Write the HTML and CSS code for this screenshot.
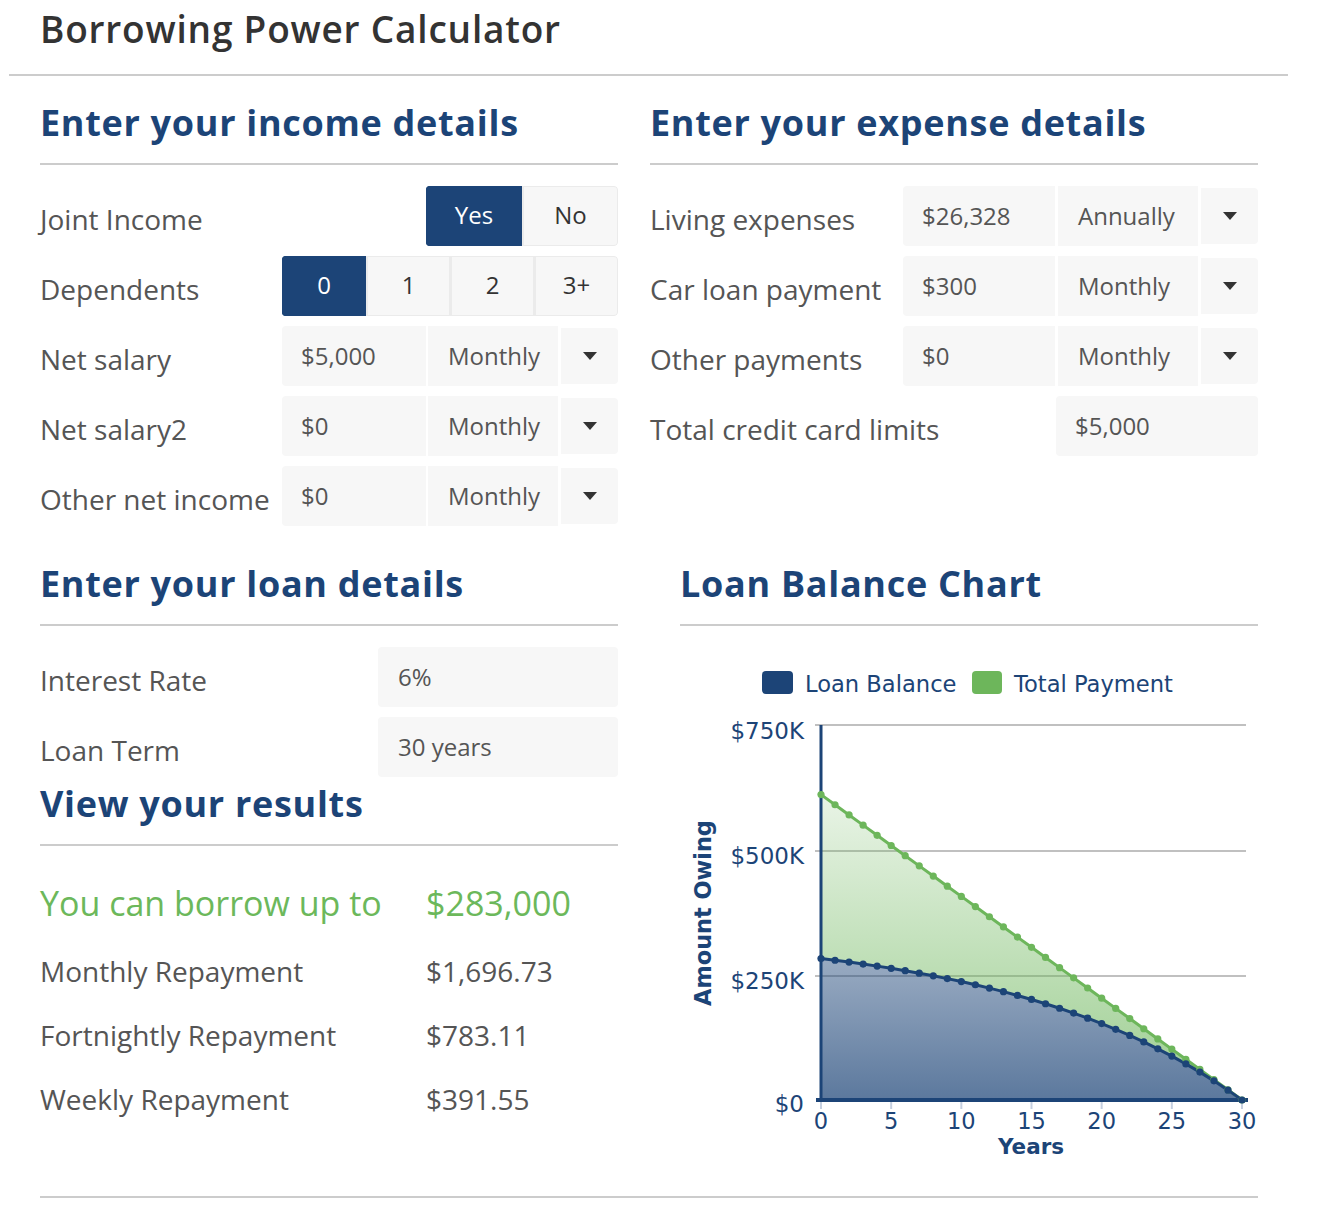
FILE: index.html
```html
<!DOCTYPE html>
<html lang="en">
<head>
<meta charset="utf-8">
<title>Borrowing Power Calculator</title>
<link rel="stylesheet" href="styles.css">
</head>
<body>
<header class="top">
  <h1 class="title">Borrowing Power Calculator</h1>
</header>
<main class="content">
  <div class="row-top">
    <section class="panel">
      <h2 class="sec-title">Enter your income details</h2>
      <div class="fields">
        <div class="frow">
          <span class="flabel">Joint Income</span>
          <div class="seg seg-yn"><span class="btn on">Yes</span><span class="btn">No</span></div>
        </div>
        <div class="frow">
          <span class="flabel">Dependents</span>
          <div class="seg seg-dep"><span class="btn on">0</span><span class="btn">1</span><span class="btn">2</span><span class="btn">3+</span></div>
        </div>
        <div class="frow">
          <span class="flabel">Net salary</span>
          <div class="field field-a"><span class="inp">$5,000</span><span class="sel">Monthly</span><span class="arr"></span></div>
        </div>
        <div class="frow">
          <span class="flabel">Net salary2</span>
          <div class="field field-a"><span class="inp">$0</span><span class="sel">Monthly</span><span class="arr"></span></div>
        </div>
        <div class="frow">
          <span class="flabel">Other net income</span>
          <div class="field field-a"><span class="inp">$0</span><span class="sel">Monthly</span><span class="arr"></span></div>
        </div>
      </div>
    </section>
    <section class="panel">
      <h2 class="sec-title">Enter your expense details</h2>
      <div class="fields">
        <div class="frow">
          <span class="flabel">Living expenses</span>
          <div class="field field-b"><span class="inp">$26,328</span><span class="sel">Annually</span><span class="arr"></span></div>
        </div>
        <div class="frow">
          <span class="flabel">Car loan payment</span>
          <div class="field field-b"><span class="inp">$300</span><span class="sel">Monthly</span><span class="arr"></span></div>
        </div>
        <div class="frow">
          <span class="flabel">Other payments</span>
          <div class="field field-b"><span class="inp">$0</span><span class="sel">Monthly</span><span class="arr"></span></div>
        </div>
        <div class="frow">
          <span class="flabel">Total credit card limits</span>
          <span class="single single-cc">$5,000</span>
        </div>
      </div>
    </section>
  </div>

  <div class="row-bottom">
    <section class="panel">
      <h2 class="sec-title">Enter your loan details</h2>
      <div class="fields">
        <div class="frow">
          <span class="flabel">Interest Rate</span>
          <span class="single single-loan">6%</span>
        </div>
        <div class="frow">
          <span class="flabel">Loan Term</span>
          <span class="single single-loan">30 years</span>
        </div>
      </div>
      <h2 class="sec-title results-title">View your results</h2>
      <div class="results">
        <div class="res big"><span>You can borrow up to</span><span>$283,000</span></div>
        <div class="res"><span>Monthly Repayment</span><span>$1,696.73</span></div>
        <div class="res"><span>Fortnightly Repayment</span><span>$783.11</span></div>
        <div class="res"><span>Weekly Repayment</span><span>$391.55</span></div>
      </div>
    </section>
    <section class="panel">
      <h2 class="sec-title">Loan Balance Chart</h2>
      <svg id="chart" class="chart" width="578" height="530" viewBox="0 0 578 530" xmlns="http://www.w3.org/2000/svg">
        <defs>
          <linearGradient id="gGreen" gradientUnits="userSpaceOnUse" x1="0" y1="85" x2="0" y2="460">
            <stop offset="0" stop-color="#6db65b" stop-opacity="0.03"/>
            <stop offset="1" stop-color="#6db65b" stop-opacity="0.68"/>
          </linearGradient>
          <linearGradient id="gBlue" gradientUnits="userSpaceOnUse" x1="0" y1="85" x2="0" y2="460">
            <stop offset="0" stop-color="#1c4477" stop-opacity="0"/>
            <stop offset="1" stop-color="#1c4477" stop-opacity="0.72"/>
          </linearGradient>
        </defs>
        <g class="legend">
          <rect x="82" y="31" width="31" height="23" rx="4" class="sw-navy"/>
          <text x="125" y="52" class="lg-text">Loan Balance</text>
          <rect x="292" y="31" width="30" height="23" rx="4" class="sw-green"/>
          <text x="334" y="52" class="lg-text">Total Payment</text>
        </g>
        <g class="grid">
          <line x1="135" y1="85" x2="566" y2="85"/>
          <line x1="135" y1="211" x2="566" y2="211"/>
          <line x1="135" y1="336" x2="566" y2="336"/>
        </g>
        <g id="areas"></g>
        <g class="axis">
          <line x1="141" y1="85" x2="141" y2="460" class="yaxis"/>
          <line x1="136" y1="460" x2="568" y2="460" class="xaxis"/>
        </g>
        <g id="xticks" class="xticks"></g>
        <g id="series"></g>
        <g class="ylabels">
          <text x="124" y="99">$750K</text>
          <text x="124" y="224">$500K</text>
          <text x="124" y="349">$250K</text>
          <text x="124" y="472">$0</text>
        </g>
        <g id="xlabels" class="xlabels"></g>
        <text x="351" y="514" class="axis-title">Years</text>
        <text class="axis-title axis-title-y" transform="translate(31 273) rotate(-90)" x="0" y="0">Amount Owing</text>
      </svg>
    </section>
  </div>
  <div class="foot"></div>
</main>
<script src="script.js"></script>
</body>
</html>
```

FILE: styles.css
```css
* { box-sizing: border-box; }

body {
  margin: 0;
  font-family: "Open Sans", "Liberation Sans", sans-serif;
  color: #555;
  background: #fff;
}

.top {
  margin-left: 9px;
  width: 1279px;
  padding: 4px 0 20px 31px;
  border-bottom: 2px solid #cccccc;
}

.title {
  margin: 0;
  font-size: 37px;
  line-height: 50px;
  font-weight: 600;
  letter-spacing: 0.8px;
  color: #333;
}

.content {
  margin-left: 40px;
  width: 1218px;
}

.row-top {
  display: grid;
  grid-template-columns: 578px 608px;
  column-gap: 32px;
  margin-top: 27px;
}

.row-bottom {
  display: grid;
  grid-template-columns: 578px 578px;
  column-gap: 62px;
  margin-top: 38px;
}

.sec-title {
  margin: 0;
  font-size: 36px;
  line-height: 40px;
  font-weight: 700;
  letter-spacing: 0.7px;
  color: #1c4477;
  padding-bottom: 20px;
  border-bottom: 2px solid #cccccc;
  white-space: nowrap;
}

.results-title { margin-top: 7px; }

.fields {
  display: flex;
  flex-direction: column;
  gap: 10px;
  margin-top: 21px;
}

.frow {
  display: flex;
  justify-content: space-between;
  align-items: flex-start;
  height: 60px;
}

.flabel {
  font-size: 28px;
  line-height: 28px;
  padding-top: 19px;
  color: #555;
  white-space: nowrap;
}

/* segmented buttons */
.seg {
  display: flex;
  height: 60px;
  border-radius: 4px;
  overflow: hidden;
}

.seg .btn {
  display: flex;
  align-items: center;
  justify-content: center;
  padding-bottom: 3px;
  background: #f7f7f7;
  border: 1px solid #ebebeb;
  border-left-width: 0;
  font-size: 24px;
  color: #333;
}

.seg .btn:first-child { border-left-width: 1px; }
.seg .btn:last-child { border-radius: 0 4px 4px 0; }

.seg .btn + .btn { border-left: 2px solid #ebebeb; }

.seg .btn.on {
  background: #1c4477;
  border-color: #1c4477;
  color: #fff;
}

.seg-yn .btn { width: 96px; }
.seg-dep .btn { width: 84px; }

/* input + select groups */
.field {
  display: flex;
  height: 60px;
}

.inp,
.sel,
.single {
  background: #f7f7f7;
  font-size: 24px;
  line-height: 60px;
  height: 60px;
  padding-left: 20px;
  color: #555;
  white-space: nowrap;
}

.inp { border-radius: 4px 0 0 4px; padding-left: 19px; }

.sel { margin-left: 2px; }

.arr {
  display: flex;
  align-items: center;
  justify-content: center;
  width: 57px;
  height: 56px;
  margin-top: 2px;
  margin-left: 3px;
  background: #f7f7f7;
  border-radius: 0 4px 4px 0;
}

.arr::after {
  content: "";
  border-left: 7px solid transparent;
  border-right: 7px solid transparent;
  border-top: 8px solid #333;
}

.field-a .inp { width: 144px; }
.field-a .sel { width: 130px; }
.field-b .inp { width: 152px; }
.field-b .sel { width: 140px; margin-left: 3px; }

.single { border-radius: 4px; }
.single-cc { width: 202px; padding-left: 19px; }
.single-loan { width: 240px; }

/* results */
.results { margin-top: 21px; }

.res {
  display: grid;
  grid-template-columns: 386px 1fr;
  font-size: 28px;
  line-height: 64px;
  color: #555;
  white-space: nowrap;
}

.res.big {
  font-size: 34px;
  line-height: 72px;
  color: #6cb85b;
}

/* chart */
.chart {
  display: block;
  margin-top: 14px;
  font-family: "DejaVu Sans", "Liberation Sans", sans-serif;
}

.sw-navy { fill: #1c4477; }
.sw-green { fill: #6db65b; }

.lg-text {
  font-size: 22.6px;
  fill: #1c4477;
}

.grid line {
  stroke: #c0c0c0;
  stroke-width: 2;
}

.yaxis { stroke: #1c4477; stroke-width: 3; }
.xaxis { stroke: #1c4477; stroke-width: 4; }

.xticks line { stroke: #c6d0e0; stroke-width: 2; }

.ylabels text {
  font-size: 23px;
  fill: #1c4477;
  text-anchor: end;
}

.xlabels text {
  font-size: 22.5px;
  fill: #1c4477;
  text-anchor: middle;
}

.axis-title {
  font-size: 21.5px;
  font-weight: 700;
  fill: #1c4477;
  text-anchor: middle;
}

.axis-title-y { font-size: 22.4px; }

.area-green { fill: url(#gGreen); }
.area-blue { fill: url(#gBlue); }

.line-green { fill: none; stroke: #6db65b; stroke-width: 3; stroke-linejoin: round; }
.line-blue { fill: none; stroke: #1c4477; stroke-width: 3; stroke-linejoin: round; }

.dot-green { fill: #6db65b; }
.dot-blue { fill: #1c4477; }

.foot {
  margin-top: 26px;
  border-top: 2px solid #cccccc;
}
```

FILE: script.js
```js
(function () {
  var NS = "http://www.w3.org/2000/svg";
  var x0 = 141, xw = 421 / 30, yb = 460, ys = 0.0005;
  var P = 283000, pmt = 1696.73, r = 0.005;
  var bal = [], tot = [];
  for (var t = 0; t <= 30; t++) {
    var g = Math.pow(1 + r, 12 * t);
    var b = P * g - pmt * (g - 1) / r;
    if (b < 0) b = 0;
    bal.push(b);
    tot.push(pmt * 12 * (30 - t));
  }
  function X(i) { return x0 + i * xw; }
  function Y(v) { return yb - v * ys; }
  function el(name, attrs, parent) {
    var e = document.createElementNS(NS, name);
    for (var k in attrs) e.setAttribute(k, attrs[k]);
    parent.appendChild(e);
    return e;
  }
  function line(a) {
    return a.map(function (v, i) { return (i ? "L" : "M") + X(i).toFixed(2) + " " + Y(v).toFixed(2); }).join(" ");
  }
  var areas = document.getElementById("areas");
  var series = document.getElementById("series");
  var xt = document.getElementById("xticks");
  var xl = document.getElementById("xlabels");

  var d = line(tot);
  for (var i = 30; i >= 0; i--) d += " L" + X(i).toFixed(2) + " " + Y(bal[i]).toFixed(2);
  el("path", { d: d + " Z", "class": "area-green" }, areas);
  el("path", { d: line(bal) + " L" + X(30) + " " + yb + " L" + X(0) + " " + yb + " Z", "class": "area-blue" }, areas);

  el("path", { d: line(tot), "class": "line-green" }, series);
  el("path", { d: line(bal), "class": "line-blue" }, series);
  for (var j = 0; j <= 30; j++) {
    el("circle", { cx: X(j).toFixed(2), cy: Y(tot[j]).toFixed(2), r: 3.6, "class": "dot-green" }, series);
  }
  for (var k = 0; k <= 30; k++) {
    el("circle", { cx: X(k).toFixed(2), cy: Y(bal[k]).toFixed(2), r: 3.6, "class": "dot-blue" }, series);
  }
  for (var y = 0; y <= 30; y += 5) {
    el("line", { x1: X(y), y1: 462, x2: X(y), y2: 469 }, xt);
    var tx = el("text", { x: X(y).toFixed(2), y: 489 }, xl);
    tx.textContent = String(y);
  }
})();
```
